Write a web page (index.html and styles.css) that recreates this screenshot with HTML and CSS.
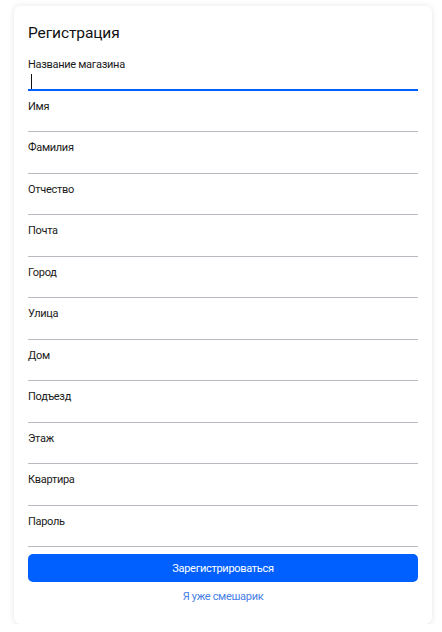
FILE: index.html
```html
<!DOCTYPE html>
<html lang="ru">
<head>
<meta charset="utf-8">
<link rel="stylesheet" href="styles.css">
</head>
<body>
<div class="card">
  <h1 class="title">Регистрация</h1>
  <div class="field active">
    <div class="label">Название магазина</div>
    <div class="input"><span class="caret"></span></div>
  </div>
  <div class="field"><div class="label">Имя</div><div class="input"></div></div>
  <div class="field"><div class="label">Фамилия</div><div class="input"></div></div>
  <div class="field"><div class="label">Отчество</div><div class="input"></div></div>
  <div class="field"><div class="label">Почта</div><div class="input"></div></div>
  <div class="field"><div class="label">Город</div><div class="input"></div></div>
  <div class="field"><div class="label">Улица</div><div class="input"></div></div>
  <div class="field"><div class="label">Дом</div><div class="input"></div></div>
  <div class="field"><div class="label">Подъезд</div><div class="input"></div></div>
  <div class="field"><div class="label">Этаж</div><div class="input"></div></div>
  <div class="field"><div class="label">Квартира</div><div class="input"></div></div>
  <div class="field"><div class="label">Пароль</div><div class="input"></div></div>
  <button class="btn">Зарегистрироваться</button>
  <a class="link">Я уже смешарик</a>
</div>
</body>
</html>
```
FILE: styles.css
```css
html, body {
  margin: 0;
  padding: 0;
  background: #ffffff;
}
body {
  padding: 6px 10px 0 14px;
  font-family: Roboto, "Noto Sans", sans-serif;
  color: #1a1a1a;
}
.card {
  background: #fff;
  border-radius: 6px;
  box-shadow: 0 0 6px rgba(0,0,0,0.10), 0 1px 2px rgba(0,0,0,0.04);
  padding: 17px 14px 20px;
  display: flex;
  flex-direction: column;
}
.title {
  margin: 0 0 6px;
  font-size: 15.5px;
  font-weight: 400;
  line-height: 20px;
  letter-spacing: -0.1px;
  color: #111;
}
.field {
  padding-top: 8px;
  display: flex;
  flex-direction: column;
}
.label {
  font-size: 11px;
  line-height: 16px;
  letter-spacing: -0.3px;
  color: #1a1a1a;
}
.input {
  height: 16.5px;
  border-bottom: 1px solid #b8bcc2;
  position: relative;
}
.active .input {
  border-bottom: 2px solid #0060ff;
  height: 15.5px;
}
.caret {
  position: absolute;
  left: 3px;
  top: 1px;
  width: 1px;
  height: 15px;
  background: #111;
}
.btn {
  margin-top: 7px;
  height: 28px;
  border: none;
  border-radius: 5px;
  background: #0060ff;
  color: #fff;
  font-family: Roboto, "Noto Sans", sans-serif;
  font-size: 11px;
  letter-spacing: -0.3px;
  padding: 0;
}
.link {
  margin-top: 8px;
  text-align: center;
  font-size: 11px;
  line-height: 14px;
  letter-spacing: -0.3px;
  color: #4680e8;
}
```
